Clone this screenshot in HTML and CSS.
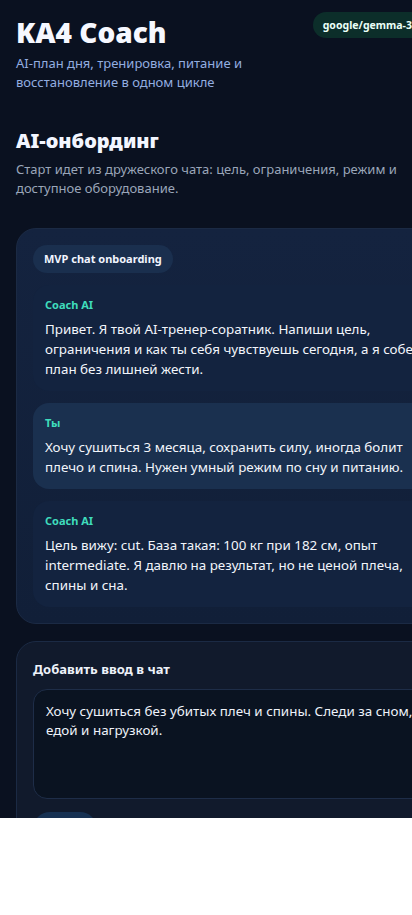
FILE: index.html
```html
<!DOCTYPE html>
<html lang="ru">
<head>
    <meta charset="UTF-8">
    <meta name="viewport" content="width=device-width, initial-scale=1.0">
    <title>KA4 Coach</title>
    <link rel="stylesheet" href="styles.css">
</head>
<body>
    <div class="app">
        <div class="header">
            <div class="brand">
                <h1>KA4 Coach</h1>
                <p>AI-план дня, тренировка, питание и восстановление в одном цикле</p>
            </div>
            <div class="model-badge">google/gemma-3-27b-it</div>
        </div>

        <div class="section-head">
            <h2>AI-онбординг</h2>
            <p>Старт идет из дружеского чата: цель, ограничения, режим и доступное оборудование.</p>
        </div>

        <div class="card chat-card">
            <span class="pill">MVP chat onboarding</span>
            <div class="message coach">
                <div class="author">Coach AI</div>
                <div class="text">Привет. Я твой AI-тренер-соратник. Напиши цель, ограничения и как ты себя чувствуешь сегодня, а я соберу план без лишней жести.</div>
            </div>
            <div class="message user">
                <div class="author">Ты</div>
                <div class="text">Хочу сушиться 3 месяца, сохранить силу, иногда болит плечо и спина. Нужен умный режим по сну и питанию.</div>
            </div>
            <div class="message coach">
                <div class="author">Coach AI</div>
                <div class="text">Цель вижу: cut. База такая: 100 кг при 182 см, опыт intermediate. Я давлю на результат, но не ценой плеча, спины и сна.</div>
            </div>
        </div>

        <div class="card input-card">
            <label for="chat_input">Добавить ввод в чат</label>
            <textarea id="chat_input">Хочу сушиться без убитых плеч и спины. Следи за сном, едой и нагрузкой.</textarea>
            <button type="button" class="send-button">Send</button>
        </div>
    </div>
</body>
</html>
```

FILE: styles.css
```css
html, body {
    margin: 0;
    background: #ffffff;
}
body {
    font-family: 'Noto Sans', 'Open Sans', sans-serif;
    color: #eef3ff;
    overflow: hidden;
}
.app {
    width: 480px;
    height: 818px;
    overflow: hidden;
    box-sizing: border-box;
    padding: 12px 16px 0;
    background: #0a1120;
}
.header {
    display: flex;
    justify-content: space-between;
    align-items: flex-start;
}
.brand h1 {
    margin: 3px 0 0;
    font-size: 28px;
    line-height: 34px;
    font-weight: 900;
    color: #f6f8ff;
}
.brand p {
    margin: 5px 0 0;
    max-width: 250px;
    font-size: 13px;
    line-height: 19px;
    color: #93aee0;
}
.model-badge {
    margin-right: 9px;
    background: #0c2e2a;
    color: #eafff7;
    font-size: 10.5px;
    font-weight: 700;
    line-height: 26px;
    padding: 0 10px;
    border-radius: 13px;
}
.section-head {
    margin-top: 36px;
}
.section-head h2 {
    margin: 0;
    font-size: 20px;
    line-height: 26px;
    font-weight: 900;
    color: #f3f6ff;
}
.section-head p {
    margin: 6px 0 0;
    font-size: 13px;
    line-height: 19px;
    color: #9aa6b9;
}
.card {
    border: 1px solid #1b2a44;
    border-radius: 20px;
    padding: 16px 16px 16px;
}
.chat-card {
    margin-top: 30px;
    background: linear-gradient(180deg, #14233f 0%, #111f38 100%);
    display: flex;
    flex-direction: column;
    align-items: flex-start;
    gap: 12px;
}
.pill {
    background: #1a2f4e;
    color: #f1f5ff;
    font-size: 11px;
    font-weight: 700;
    line-height: 28px;
    padding: 0 11px;
    border-radius: 14px;
}
.message {
    align-self: stretch;
    padding: 12px;
    border-radius: 16px;
}
.message.coach {
    background: #13233f;
}
.message.user {
    background: #1a304f;
}
.author {
    font-size: 11px;
    line-height: 16px;
    font-weight: 700;
    color: #3fdcbc;
    margin-bottom: 6px;
}
.text {
    font-size: 13.4px;
    line-height: 20px;
    color: #f2f5fb;
}
.input-card {
    margin-top: 17px;
    padding-top: 17px;
    background: #111a2c;
    display: flex;
    flex-direction: column;
    align-items: flex-start;
}
.input-card label {
    font-size: 13px;
    line-height: 20px;
    font-weight: 700;
    color: #eef2fa;
}
.input-card textarea {
    align-self: stretch;
    margin-top: 10px;
    height: 110px;
    box-sizing: border-box;
    padding: 12px;
    background: #0a1321;
    border: 1px solid #1e2d48;
    border-radius: 14px;
    color: #eef2fa;
    font-family: inherit;
    font-size: 13.4px;
    line-height: 19px;
    resize: none;
    outline: none;
}
.send-button {
    margin-top: 13px;
    width: 64px;
    height: 34px;
    border: none;
    border-radius: 17px;
    background: #173152;
    color: #eef2fa;
    font-family: inherit;
    font-size: 13px;
    font-weight: 700;
}
```
